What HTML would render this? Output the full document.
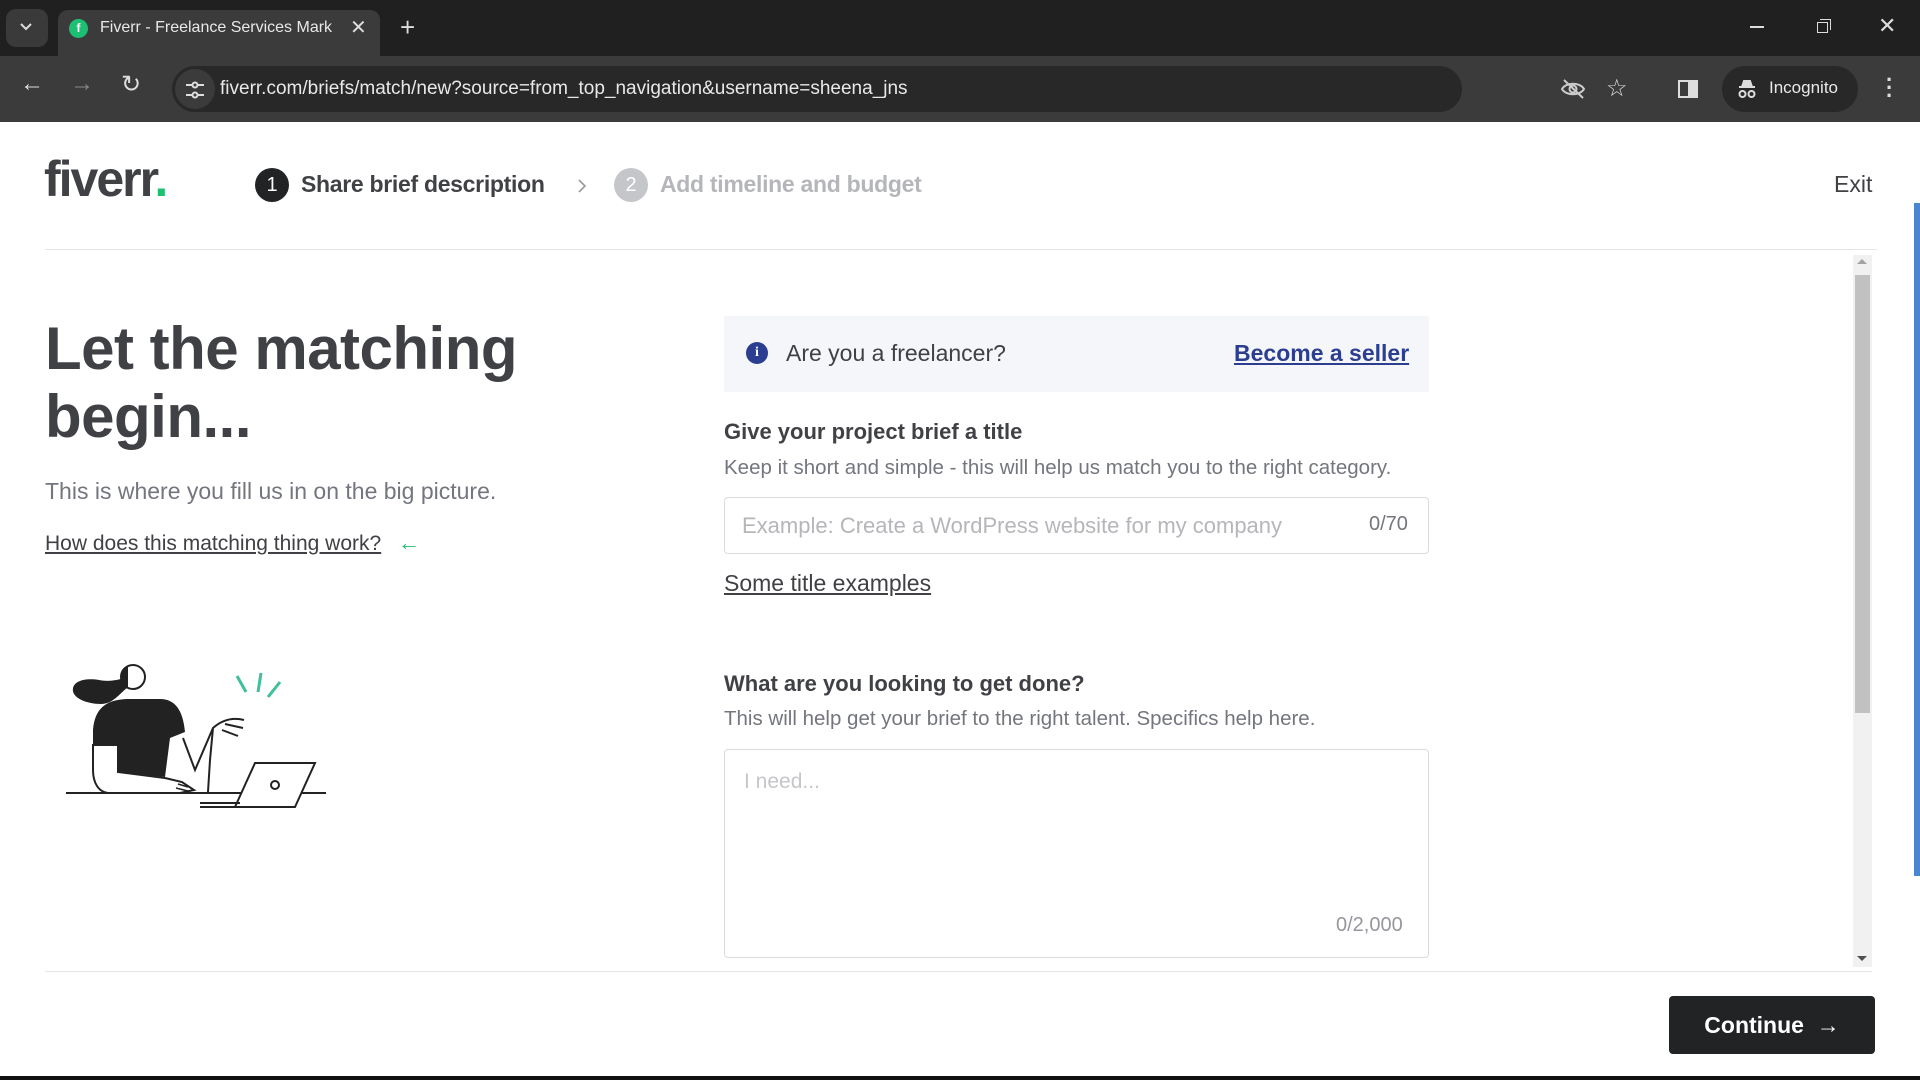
<!DOCTYPE html>
<html><head><meta charset="utf-8"><style>
*{margin:0;padding:0;box-sizing:border-box}
body{width:1920px;height:1080px;overflow:hidden;background:#fff;font-family:"Liberation Sans",sans-serif;position:relative}
.a{position:absolute;white-space:nowrap}
</style></head><body>
<!-- tab bar -->
<div class="a" style="left:0;top:0;width:1920px;height:56px;background:#202020"></div>
<div class="a" style="left:6px;top:9px;width:42px;height:38px;border-radius:10px;background:#3a3a3a"></div>
<svg class="a" style="left:19px;top:22px" width="14" height="10"><path d="M2 2l5 5 5-5" stroke="#ddd" stroke-width="2" fill="none"/></svg>
<div class="a" style="left:58px;top:10px;width:322px;height:50px;border-radius:10px 10px 0 0;background:#3b3b3b"></div>
<div class="a" style="left:69px;top:19px;width:19px;height:19px;border-radius:50%;background:#1dbf73;color:#fff;font-size:12px;font-weight:bold;text-align:center;line-height:19px">f</div>
<div class="a" style="left:100px;top:19px;color:#e8e8e8;font-size:16px;width:238px;overflow:hidden">Fiverr - Freelance Services Mark</div>
<div class="a" style="left:350px;top:15px;color:#ddd;font-size:20px">✕</div>
<div class="a" style="left:400px;top:12px;color:#ddd;font-size:26px">+</div>
<div class="a" style="left:1750px;top:26px;width:14px;height:2px;background:#ddd"></div>
<div class="a" style="left:1817px;top:22px;width:11px;height:11px;border:1.5px solid #ddd"></div>
<div class="a" style="left:1820px;top:19px;width:11px;height:11px;border-top:1.5px solid #ddd;border-right:1.5px solid #ddd"></div>
<div class="a" style="left:1878px;top:13px;color:#ddd;font-size:22px">✕</div>
<!-- toolbar -->
<div class="a" style="left:0;top:56px;width:1920px;height:66px;background:#3b3b3b"></div>
<div class="a" style="left:20px;top:70px;color:#ddd;font-size:24px">←</div>
<div class="a" style="left:70px;top:70px;color:#888;font-size:24px">→</div>
<div class="a" style="left:121px;top:70px;color:#ddd;font-size:24px">↻</div>
<div class="a" style="left:172px;top:66px;width:1290px;height:46px;border-radius:23px;background:#282828"></div>
<div class="a" style="left:175px;top:69px;width:40px;height:40px;border-radius:50%;background:#3b3b3b"></div>
<svg class="a" style="left:184px;top:80px" width="22" height="20"><path d="M2 5h6M14 5h6M2 15h6M14 15h6" stroke="#ddd" stroke-width="2"/><circle cx="11" cy="5" r="2.5" fill="none" stroke="#ddd" stroke-width="2"/><circle cx="11" cy="15" r="2.5" fill="none" stroke="#ddd" stroke-width="2"/></svg>
<div class="a" style="left:220px;top:78px;color:#e8e8e8;font-size:19px">fiverr.com/briefs/match/new?source=from_top_navigation&amp;username=sheena_jns</div>
<svg class="a" style="left:1560px;top:78px" width="26" height="22"><path d="M2 11c4-7 18-7 22 0-4 7-18 7-22 0z" fill="none" stroke="#ccc" stroke-width="2"/><circle cx="13" cy="11" r="3.5" fill="none" stroke="#ccc" stroke-width="2"/><path d="M4 2l19 18" stroke="#ccc" stroke-width="2"/></svg>
<div class="a" style="left:1606px;top:74px;color:#ddd;font-size:24px">☆</div>
<div class="a" style="left:1678px;top:80px;width:20px;height:18px;border:2px solid #ddd;background:linear-gradient(90deg,#3b3b3b 50%,#ddd 50%)"></div>
<div class="a" style="left:1722px;top:66px;width:136px;height:46px;border-radius:23px;background:#282828"></div>
<svg class="a" style="left:1736px;top:78px" width="22" height="22"><path d="M3 9h16M6 9l2-6h6l2 6" stroke="#ddd" stroke-width="2" fill="#ddd"/><circle cx="6.5" cy="16" r="3" fill="none" stroke="#ddd" stroke-width="2"/><circle cx="15.5" cy="16" r="3" fill="none" stroke="#ddd" stroke-width="2"/></svg>
<div class="a" style="left:1769px;top:78px;color:#e8e8e8;font-size:17px">Incognito</div>
<div class="a" style="left:1886px;top:76px;color:#ddd;font-size:22px;font-weight:bold;line-height:8px">·<br>·<br>·</div>
<!-- header -->
<div class="a" style="left:44px;top:150px;font-size:50px;font-weight:bold;color:#404145;letter-spacing:-2px">fiverr<span style="color:#1dbf73">.</span></div>
<div class="a" style="left:255px;top:168px;width:34px;height:34px;border-radius:50%;background:#222325;color:#fff;font-size:20px;text-align:center;line-height:34px">1</div>
<div class="a" style="left:301px;top:171px;font-size:23px;color:#404145;font-weight:bold;letter-spacing:-0.3px">Share brief description</div>
<svg class="a" style="left:576px;top:177px" width="12" height="18"><path d="M3 3l6 6-6 6" stroke="#999" stroke-width="1.6" fill="none"/></svg>
<div class="a" style="left:614px;top:168px;width:34px;height:34px;border-radius:50%;background:#c5c6c9;color:#fff;font-size:20px;text-align:center;line-height:34px">2</div>
<div class="a" style="left:660px;top:171px;font-size:23px;color:#b5b6ba;font-weight:bold;letter-spacing:-0.3px">Add timeline and budget</div>
<div class="a" style="left:1834px;top:171px;font-size:23px;color:#404145">Exit</div>
<div class="a" style="left:45px;top:249px;width:1832px;height:1px;background:#e4e5e7"></div>
<!-- left -->
<div class="a" style="left:45px;top:315px;font-size:60px;font-weight:bold;color:#404145;line-height:68px;letter-spacing:-0.5px">Let the matching<br>begin...</div>
<div class="a" style="left:45px;top:478px;font-size:23px;color:#74767e">This is where you fill us in on the big picture.</div>
<div class="a" style="left:45px;top:532px;font-size:21px;color:#404145;text-decoration:underline">How does this matching thing work?</div>
<div class="a" style="left:398px;top:530px;font-size:22px;color:#1dbf73">←</div>
<svg class="a" style="left:0;top:620px" width="400" height="220" viewBox="0 0 400 220">
<path d="M66 173H326" stroke="#222" stroke-width="2"/>
<path d="M73 68c2-8 14-10 26-8 10 2 18 0 26-2l2 10c-8 6-14 16-26 16-14 0-30-6-28-16z" fill="#222"/>
<circle cx="133" cy="57" r="12" fill="#fff" stroke="#222" stroke-width="2"/>
<path d="M128 46a12 12 0 0 0 0 22z" fill="#222"/>
<path d="M93 110C95 85 110 79 130 79L160 79C175 79 183 90 185 112L170 118L165 157L118 152L118 125L93 125Z" fill="#222"/>
<path d="M93 125L118 125L118 152L165 158L182 162L194 170L180 173L110 173C98 173 93 162 93 150Z" fill="#fff" stroke="#222" stroke-width="2"/>
<path d="M178 164l10 3M176 168l12 3" stroke="#222" stroke-width="1.5"/>
<path d="M183 118L195 150L213 108C222 100 232 97 244 100M213 108L210 140 208 172M225 104l18 4M222 110l16 6" stroke="#222" stroke-width="2" fill="none"/>
<path d="M255 143L315 143L295 187L235 187Z" fill="#fff" stroke="#222" stroke-width="2"/>
<path d="M200 183L240 183M200 187L295 187" stroke="#222" stroke-width="2"/>
<circle cx="275" cy="165" r="4" fill="none" stroke="#222" stroke-width="2"/>
<path d="M237 56l9 16M261 53l-3 19M280 62l-12 15" stroke="#3fbf9b" stroke-width="3"/>
</svg>
<!-- right form -->
<div class="a" style="left:724px;top:316px;width:705px;height:76px;background:#f5f6fa"></div>
<div class="a" style="left:746px;top:342px;width:22px;height:22px;border-radius:50%;background:#2c3e8f;color:#fff;font-size:14px;font-weight:bold;text-align:center;line-height:22px;font-family:'Liberation Serif',serif">i</div>
<div class="a" style="left:786px;top:340px;font-size:23px;color:#404145">Are you a freelancer?</div>
<div class="a" style="left:1234px;top:340px;font-size:23px;color:#2c3e8f;font-weight:bold;text-decoration:underline">Become a seller</div>
<div class="a" style="left:724px;top:419px;font-size:22px;color:#404145;font-weight:bold">Give your project brief a title</div>
<div class="a" style="left:724px;top:456px;font-size:20.5px;color:#74767e">Keep it short and simple - this will help us match you to the right category.</div>
<div class="a" style="left:724px;top:497px;width:705px;height:57px;border:1px solid #dadbdd;border-radius:4px"></div>
<div class="a" style="left:742px;top:513px;font-size:22px;color:#b5b6ba">Example: Create a WordPress website for my company</div>
<div class="a" style="left:1369px;top:513px;font-size:20px;color:#74767e">0/70</div>
<div class="a" style="left:724px;top:570px;font-size:23px;color:#404145;text-decoration:underline">Some title examples</div>
<div class="a" style="left:724px;top:671px;font-size:22px;color:#404145;font-weight:bold">What are you looking to get done?</div>
<div class="a" style="left:724px;top:707px;font-size:20.5px;color:#74767e">This will help get your brief to the right talent. Specifics help here.</div>
<div class="a" style="left:724px;top:749px;width:705px;height:209px;border:1px solid #dadbdd;border-radius:4px"></div>
<div class="a" style="left:744px;top:770px;font-size:21px;color:#c5c6c9">I need...</div>
<div class="a" style="left:1336px;top:914px;font-size:20px;color:#95979d">0/2,000</div>
<!-- scrollbar -->
<div class="a" style="left:1853px;top:255px;width:19px;height:712px;background:#f1f1f1"></div>
<div class="a" style="left:1855px;top:275px;width:15px;height:438px;background:#c1c1c1"></div>
<div class="a" style="left:1857px;top:259px;width:0;height:0;border:5px solid transparent;border-bottom-color:#a3a3a3;border-top:none"></div>
<div class="a" style="left:1857px;top:956px;width:0;height:0;border:5px solid transparent;border-top-color:#505050;border-bottom:none"></div>
<div class="a" style="left:1914px;top:203px;width:6px;height:673px;background:#4a86d0"></div>
<div class="a" style="left:45px;top:971px;width:1827px;height:1px;background:#e4e5e7"></div>
<!-- continue -->
<div class="a" style="left:1669px;top:996px;width:206px;height:58px;border-radius:4px;background:#222325;color:#fff;font-size:23px;font-weight:bold;text-align:center;line-height:58px">Continue &nbsp;→</div>
<div class="a" style="left:0;top:1076px;width:1920px;height:4px;background:#111"></div>
</body></html>
